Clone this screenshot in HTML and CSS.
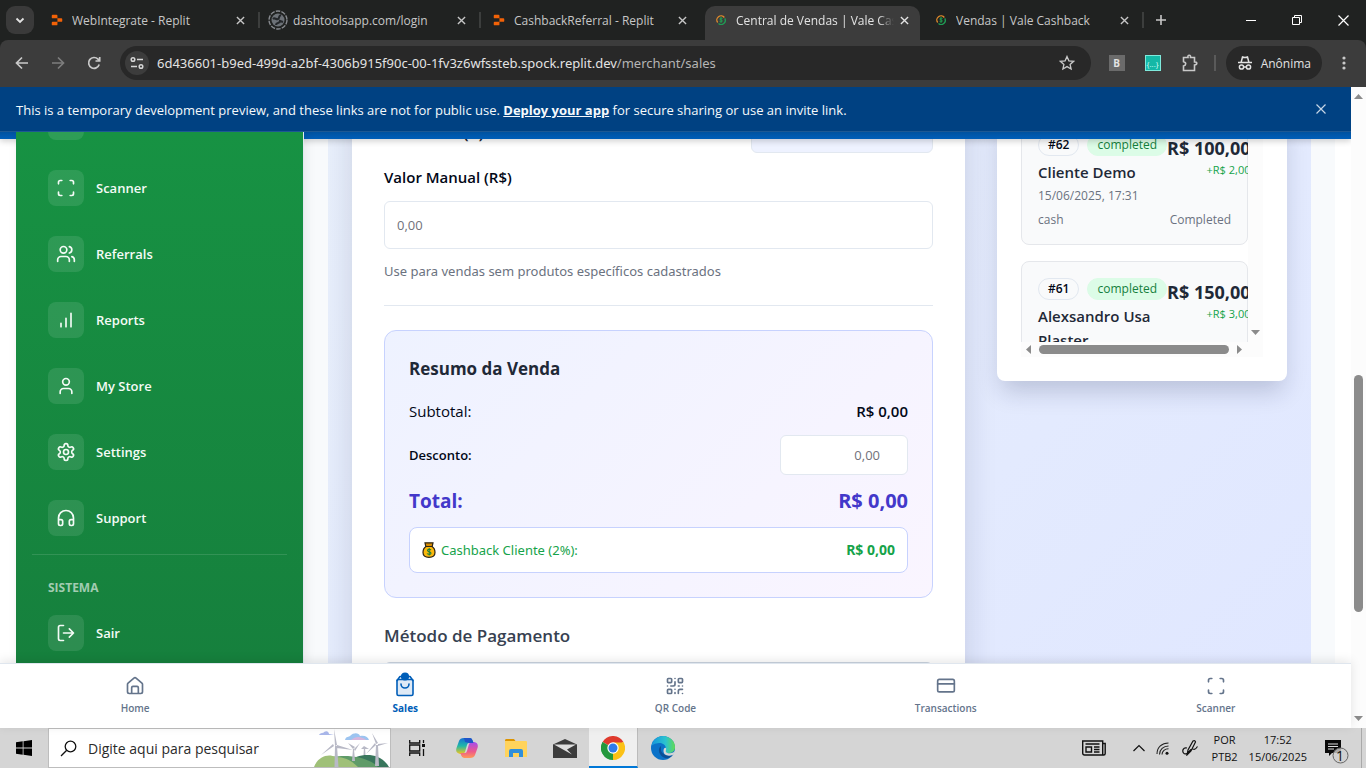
FILE: index.html
```html
<!DOCTYPE html>
<html lang="pt-BR">
<head>
<meta charset="utf-8">
<meta name="viewport" content="width=device-width, initial-scale=1">
<title>Central de Vendas | Vale Cashback</title>
<link rel="stylesheet" href="styles.css">
</head>
<body>
<svg class="defs" aria-hidden="true">
  <symbol id="replit" viewBox="0 0 16 16"><path fill="#f26207" d="M3 2h4.500q1 0 1 1v3H3q-1 0-1-1V3q0-1 1-1zM8.500 6H13q1 0 1 1v2q0 1-1 1H8.500zM2 11q0-1 1-1h5.500v3q0 1-1 1H3q-1 0-1-1z"/></symbol>
  <symbol id="vale" viewBox="0 0 12 12"><path d="M2 9a5 5 0 1 1 8-6" fill="none" stroke="#e08a2c" stroke-width="1.600"/><path d="M10.500 4A5 5 0 0 1 3 10.300" fill="none" stroke="#1f9d55" stroke-width="1.600"/><path d="M7.800 4.200C6.800 3.200 4.400 3.600 4.500 4.900s3.200.8 3.200 2.200S5 8.600 4.200 7.500M6 2.800v6.400" fill="none" stroke="#1fae57" stroke-width="1"/></symbol>
  <symbol id="x" viewBox="0 0 10 10"><path d="M1 1l8 8M9 1l-8 8" fill="none" stroke="currentColor" stroke-width="1.500"/></symbol>
  <symbol id="scan" viewBox="0 0 24 24"><path d="M3 7V5a2 2 0 0 1 2-2h2M17 3h2a2 2 0 0 1 2 2v2M21 17v2a2 2 0 0 1-2 2h-2M7 21H5a2 2 0 0 1-2-2v-2"/></symbol>
</svg>

<div class="tabstrip">
  <button class="tab-search" aria-label="Pesquisar guias"><svg width="12" height="12" viewBox="0 0 12 12"><path d="M2.500 4.500L6 8l3.500-3.500" fill="none" stroke="#e3e3e3" stroke-width="1.800"/></svg></button>
  <div class="tab"><span class="favicon"><svg width="14" height="14"><use href="#replit"/></svg></span><span class="tab-title">WebIntegrate - Replit</span><button class="tab-close" aria-label="Fechar"><svg width="9" height="9"><use href="#x"/></svg></button></div>
  <div class="tab"><span class="favicon"><svg width="20" height="20" viewBox="0 0 20 20"><circle cx="10" cy="10" r="9" fill="none" stroke="#888b90" stroke-width="1.400" stroke-dasharray="4.500 1.200"/><circle cx="10" cy="10" r="6.500" fill="#6d7278"/><path d="M5 9c2-2 3 1 5 0s0-3 3-4M8 15c0-3 4-1 4-4l3 1" fill="none" stroke="#24272a" stroke-width="2"/></svg></span><span class="tab-title">dashtoolsapp.com/login</span><button class="tab-close" aria-label="Fechar"><svg width="9" height="9"><use href="#x"/></svg></button></div>
  <div class="tab no-line"><span class="favicon"><svg width="14" height="14"><use href="#replit"/></svg></span><span class="tab-title">CashbackReferral - Replit</span><button class="tab-close" aria-label="Fechar"><svg width="9" height="9"><use href="#x"/></svg></button></div>
  <div class="tab active no-line"><span class="favicon"><svg width="10" height="10"><use href="#vale"/></svg></span><span class="tab-title">Central de Vendas | Vale Cashback</span><button class="tab-close" aria-label="Fechar"><svg width="9" height="9"><use href="#x"/></svg></button></div>
  <div class="tab"><span class="favicon"><svg width="10" height="10"><use href="#vale"/></svg></span><span class="tab-title">Vendas | Vale Cashback</span><button class="tab-close" aria-label="Fechar"><svg width="9" height="9"><use href="#x"/></svg></button></div>
  <button class="new-tab" aria-label="Nova guia"><svg width="12" height="12" viewBox="0 0 12 12"><path d="M6 1v10M1 6h10" stroke="#c7c7c7" stroke-width="1.600"/></svg></button>
  <div class="window-buttons">
    <button aria-label="Minimizar"><svg width="10" height="10"><path d="M0 5.500h10" stroke="#fff"/></svg></button>
    <button aria-label="Restaurar"><svg width="11" height="11" fill="none" stroke="#fff"><path d="M.5 2.500h7v7h-7zM2.500 2.500v-2h7v7h-2"/></svg></button>
    <button aria-label="Fechar janela"><svg width="11" height="11"><path d="M.5.5l10 10M10.500.5l-10 10" stroke="#fff" stroke-width="1.200"/></svg></button>
  </div>
</div>

<div class="toolbar">
  <div class="nav-buttons">
    <button aria-label="Voltar"><svg width="14" height="14" viewBox="0 0 14 14"><path d="M13 7H2M7 1.500L1.500 7 7 12.500"/></svg></button>
    <button aria-label="Avançar" class="dim"><svg width="14" height="14" viewBox="0 0 14 14"><path d="M1 7h11M7 1.500L12.500 7 7 12.500"/></svg></button>
    <button aria-label="Recarregar"><svg width="14" height="14" viewBox="0 0 14 14"><path d="M12.200 8.500A5.400 5.400 0 1 1 11 3.200l1.500 1.500M12.700 1v4H8.500"/></svg></button>
  </div>
  <div class="omnibox">
    <button class="site-info" aria-label="Informações do site"><svg width="14" height="14" viewBox="0 0 14 14" fill="none" stroke="#d6d6d6" stroke-width="1.500"><circle cx="3" cy="3.500" r="1.800"/><path d="M7 3.500h6M1 10.500h6"/><circle cx="11" cy="10.500" r="1.800"/></svg></button>
    <span class="url">6d436601-b9ed-499d-a2bf-4306b915f90c-00-1fv3z6wfssteb.spock.replit.dev<span>/merchant/sales</span></span>
    <button class="star" aria-label="Favoritar"><svg width="16" height="16" viewBox="0 0 16 16"><path d="M8 1.500l1.900 4.300 4.700.5-3.500 3.100 1 4.600L8 11.600 3.900 14l1-4.600L1.400 6.300l4.700-.5z" fill="none" stroke="#c9c9c9" stroke-width="1.300"/></svg></button>
  </div>
  <div class="extensions">
    <button class="ext-b" aria-label="Extensão B">B</button>
    <button class="ext-json" aria-label="JSON">{...}</button>
    <button aria-label="Extensões"><svg width="18" height="18" viewBox="0 0 18 18"><path d="M2.500 3.500H7q-.5-2.200 1.200-2.200T9.500 3.500h4V8q2.300-.2 2.300 1.300T13.500 11v5.500h-11V12q2.200-.5 2.200-2.200T2.500 7.700z" fill="none" stroke="#c9c9c9" stroke-width="1.600"/></svg></button>
    <span class="divider"></span>
    <button class="incognito"><svg width="16" height="16" viewBox="0 0 16 16" fill="none" stroke="#e3e3e3" stroke-width="1.500"><path d="M4.200 7L5.500 2q2.500 1 5 0l1.300 5M1 7.500h14"/><circle cx="4.500" cy="12" r="2.100"/><circle cx="11.500" cy="12" r="2.100"/><path d="M6.600 12h2.800"/></svg><span>Anônima</span></button>
    <button aria-label="Menu"><svg width="4" height="14" fill="#c9c9c9"><circle cx="2" cy="2" r="1.600"/><circle cx="2" cy="7" r="1.600"/><circle cx="2" cy="12" r="1.600"/></svg></button>
  </div>
</div>

<div class="viewport">
  <div class="page">
    <div class="banner">
      <p>This is a temporary development preview, and these links are not for public use. <a href="#">Deploy your app</a> for secure sharing or use an invite link.</p>
      <button aria-label="Close"><svg width="10" height="10" viewBox="0 0 10 10"><path d="M.5.5l9 9M9.500.5l-9 9" stroke="#c5d5e6" stroke-width="1.200"/></svg></button>
    </div>

    <div class="app">
      <div class="app-header"></div>
      <aside class="sidebar">
        <nav class="side-nav">
          <a href="#"><span class="tile"></span></a>
          <a href="#"><span class="tile"><svg class="icon"><use href="#scan"/></svg></span>Scanner</a>
          <a href="#"><span class="tile"><svg class="icon" viewBox="0 0 24 24"><path d="M16 21v-2a4 4 0 0 0-4-4H6a4 4 0 0 0-4 4v2"/><circle cx="9" cy="7" r="4"/><path d="M22 21v-2a4 4 0 0 0-3-3.870M16 3.130a4 4 0 0 1 0 7.750"/></svg></span>Referrals</a>
          <a href="#"><span class="tile"><svg class="icon" viewBox="0 0 24 24"><path d="M12 20V10M18 20V4M6 20v-4"/></svg></span>Reports</a>
          <a href="#"><span class="tile"><svg class="icon" viewBox="0 0 24 24"><path d="M19 21v-2a4 4 0 0 0-4-4H9a4 4 0 0 0-4 4v2"/><circle cx="12" cy="7" r="4"/></svg></span>My Store</a>
          <a href="#"><span class="tile"><svg class="icon" viewBox="0 0 24 24"><path d="M12.220 2h-.440a2 2 0 0 0-2 2v.180a2 2 0 0 1-1 1.730l-.430.250a2 2 0 0 1-2 0l-.150-.080a2 2 0 0 0-2.730.730l-.220.380a2 2 0 0 0 .730 2.730l.150.100a2 2 0 0 1 1 1.720v.510a2 2 0 0 1-1 1.740l-.150.090a2 2 0 0 0-.730 2.730l.220.380a2 2 0 0 0 2.730.730l.150-.080a2 2 0 0 1 2 0l.430.250a2 2 0 0 1 1 1.730V20a2 2 0 0 0 2 2h.440a2 2 0 0 0 2-2v-.180a2 2 0 0 1 1-1.730l.430-.250a2 2 0 0 1 2 0l.150.080a2 2 0 0 0 2.730-.730l.220-.390a2 2 0 0 0-.730-2.730l-.150-.080a2 2 0 0 1-1-1.740v-.500a2 2 0 0 1 1-1.740l.150-.090a2 2 0 0 0 .730-2.730l-.220-.380a2 2 0 0 0-2.730-.730l-.150.080a2 2 0 0 1-2 0l-.430-.250a2 2 0 0 1-1-1.730V4a2 2 0 0 0-2-2z"/><circle cx="12" cy="12" r="3"/></svg></span>Settings</a>
          <a href="#"><span class="tile"><svg class="icon" viewBox="0 0 24 24"><path d="M3 14h3a2 2 0 0 1 2 2v3a2 2 0 0 1-2 2H5a2 2 0 0 1-2-2v-7a9 9 0 0 1 18 0v7a2 2 0 0 1-2 2h-1a2 2 0 0 1-2-2v-3a2 2 0 0 1 2-2h3"/></svg></span>Support</a>
        </nav>
        <div class="side-system">
          <h2>SISTEMA</h2>
          <a href="#"><span class="tile"><svg class="icon" viewBox="0 0 24 24"><path d="M9 21H5a2 2 0 0 1-2-2V5a2 2 0 0 1 2-2h4M16 17l5-5-5-5M21 12H9"/></svg></span>Sair</a>
        </div>
      </aside>

      <main class="content">
        <div class="panel">
          <section class="card sale">
            <div class="row products"><h3>Produtos (0)</h3><button aria-label="Adicionar produto"></button></div>
            <label class="manual-label" for="manual">Valor Manual (R$)</label>
            <input class="manual" id="manual" type="text" placeholder="0,00">
            <p class="help">Use para vendas sem produtos específicos cadastrados</p>
            <hr>
            <div class="summary">
              <h3>Resumo da Venda</h3>
              <div class="row"><span>Subtotal:</span><strong>R$ 0,00</strong></div>
              <div class="row"><label for="discount">Desconto:</label><input id="discount" type="text" placeholder="0,00"></div>
              <div class="row total"><span>Total:</span><span class="total-value">R$ 0,00</span></div>
              <div class="row cashback"><span class="bag"><svg width="14" height="16" viewBox="0 0 14 16"><path d="M4 4.500C1.500 6 1 8.500 1 10.500 1 14 3.500 15.300 7 15.300s6-1.300 6-4.800c0-2-.5-4.500-3-6z" fill="#fbb80b" stroke="#2b2415" stroke-width="1.200"/><path d="M3 .8h8l-.8 3.700H3.800z" fill="#d78b00" stroke="#2b2415" stroke-width="1.200"/><path d="M9 8C8 7 5.500 7 5.500 8.500S9 9.700 9 11.200 6 12.700 5 11.500M7.200 6v7.500" fill="none" stroke="#18803c" stroke-width="1.100"/></svg>Cashback Cliente (2%):</span><b>R$ 0,00</b></div>
            </div>
            <h3 class="method-title" id="method-title">Método de Pagamento</h3>
            <select class="method" aria-labelledby="method-title"><option></option></select>
          </section>

          <section class="card recent">
            <div class="list">
              <div class="list-view">
                <article class="sale-item">
                  <div class="item-head">
                    <div><div class="pills"><span class="pill">#62</span><span class="pill done">completed</span></div><h4>Cliente Demo</h4><p>15/06/2025, 17:31</p></div>
                    <div class="amount"><b>R$ 100,00</b><span>+R$ 2,00</span></div>
                  </div>
                  <div class="row item-foot"><span>cash</span><span>Completed</span></div>
                </article>
                <article class="sale-item">
                  <div class="item-head">
                    <div><div class="pills"><span class="pill">#61</span><span class="pill done">completed</span></div><h4>Alexsandro Usa Plaster</h4></div>
                    <div class="amount"><b>R$ 150,00</b><span>+R$ 3,00</span></div>
                  </div>
                </article>
              </div>
              <div class="v-track"><svg width="9" height="5"><path d="M0 0h9L4.500 5z" fill="#8b8b8b"/></svg></div>
              <div class="h-track"><svg width="5" height="9"><path d="M5 0v9L0 4.500z" fill="#8b8b8b"/></svg><span class="h-thumb"></span><svg width="5" height="9"><path d="M0 0v9l5-4.500z" fill="#8b8b8b"/></svg></div>
            </div>
          </section>
        </div>
      </main>
    </div>

    <nav class="bottom-nav">
      <a href="#"><svg class="icon" viewBox="0 0 24 24"><path d="M3 10a2 2 0 0 1 .7-1.500l7-6a2 2 0 0 1 2.600 0l7 6A2 2 0 0 1 21 10v9a2 2 0 0 1-2 2H5a2 2 0 0 1-2-2zM8 21v-7a1.500 1.500 0 0 1 1.500-1.500h5A1.500 1.500 0 0 1 16 14v7"/></svg>Home</a>
      <a href="#" class="current"><svg class="icon bag-icon" viewBox="0 0 20 24"><rect x="2" y="7" width="16" height="16" rx="1.500" fill="#dfeaf6"/><path d="M2 8l3-4h10l3 4M6 11.500a4 4 0 0 0 8 0"/><circle cx="10" cy="4" r="3.300" fill="currentColor"/></svg>Sales</a>
      <a href="#"><svg class="icon" viewBox="0 0 24 24"><rect width="5" height="5" x="3" y="3" rx="1"/><rect width="5" height="5" x="16" y="3" rx="1"/><rect width="5" height="5" x="3" y="16" rx="1"/><path d="M21 16h-3a2 2 0 0 0-2 2v3M21 21v.01M12 7v3a2 2 0 0 1-2 2H7M3 12h.01M12 3h.01M12 16v.01M16 12h1M21 12v.01M12 21v-1"/></svg>QR Code</a>
      <a href="#"><svg class="icon" viewBox="0 0 24 24"><rect width="20" height="15" x="2" y="4" rx="2"/><path d="M2 9.500h20"/></svg>Transactions</a>
      <a href="#"><svg class="icon"><use href="#scan"/></svg>Scanner</a>
    </nav>
  </div>

  <div class="page-track">
    <svg width="9" height="5"><path d="M0 5h9L4.500 0z" fill="#8b8b8b"/></svg>
    <span class="gap-top"></span><span class="page-thumb"></span><span class="gap-bottom"></span>
    <svg width="9" height="5"><path d="M0 0h9L4.500 5z" fill="#8b8b8b"/></svg>
  </div>
</div>

<div class="taskbar">
  <button class="start" aria-label="Iniciar"><svg width="16" height="16" viewBox="0 0 16 16"><path d="M0 2.200L6.700 1.300v6.300H0zM7.500 1.200L16 0v7.600H7.500zM0 8.400h6.700v6.300L0 13.800zM7.500 8.400H16V16l-8.500-1.200z"/></svg></button>
  <label class="search"><svg width="17" height="17" viewBox="0 0 17 17" fill="none" stroke="#111" stroke-width="1.300"><circle cx="10.500" cy="6.500" r="5.300"/><path d="M6.700 10.300L1 16"/></svg><input type="text" placeholder="Digite aqui para pesquisar" aria-label="Pesquisar">
    <svg class="scene" width="76" height="38" viewBox="0 0 76 38"><path d="M5 6c2-3 4-1 5-3 3-2 5 0 5 2l5 1z" fill="#a9b7ea"/><path d="M31 11c1-4 4-3 5-4 4-4 9-3 10 0 5-1 8 1 9 4z" fill="#9cc4f0"/><path d="M37 11c5-5 12-3 15 0z" fill="#d6b6dd"/><path d="M35 32c8-7 30-11 40 6H35z" fill="#38765c"/><path d="M12 30c10-5 40-5 52 8H12z" fill="#5f9b68"/><path d="M0 38c4-10 13-14 22-10 10 0 17 5 22 10z" fill="#9fc078"/><g fill="#b8b9c6"><path d="M21 17h2l1.500 21h-4zM21 17L20 0l3 16zM20 17L7 26l12-11zM23 16l16 5-16-2zM62 16h2l1 21h-4zM62 15L58 4l6 10zM62 16l-10 9 9-11zM64 15l10-1-10 3zM39 20h1l1 12h-3zM39 20l-5-6 7 4zM40 20l6-6-5 8zM50 18h1l.5 8h-2zM50 18v-4M47 20l3-3 5 3z"/></g></svg>
  </label>
  <div class="apps">
    <button aria-label="Visão de tarefas"><svg width="17" height="16" viewBox="0 0 17 16" fill="none" stroke="#111" stroke-width="1.300"><path d="M.7 0v3h10V0M.7 16v-3h10v3M.7 5h10v6H.7zM14.500 0v3M14.500 9v7"/><path d="M13 4h3v3h-3z" fill="#111" stroke="none"/></svg></button>
    <button aria-label="Copilot"><svg width="22" height="20" viewBox="0 0 22 20"><defs><linearGradient id="cpa" x2="0" y2="1"><stop stop-color="#1670d4"/><stop offset=".5" stop-color="#20b8a8"/><stop offset="1" stop-color="#f5c51b"/></linearGradient><linearGradient id="cpb" x2="0" y2="1"><stop stop-color="#a34cf0"/><stop offset=".6" stop-color="#ee5a8b"/><stop offset="1" stop-color="#ff9a57"/></linearGradient></defs><path d="M8 0h6q2 0 2.800 3l.7 2H13q-1.500 0-2 2L9 14q-.8 2-3 2H4q-5-1-3.500-6L3 3Q4 0 8 0z" fill="url(#cpa)"/><path d="M14 20H8q-2 0-3-3l-.5-2H9q1.500 0 2-2l2-7q.8-2 3-2h2q5 1 3.500 6L19 17q-1 3-5 3z" fill="url(#cpb)"/><path d="M8 0h6q2 0 2.800 3l.7 2H13L9 4z" fill="#1f54c8"/></svg></button>
    <button aria-label="Explorador de Arquivos"><svg width="22" height="19" viewBox="0 0 22 19"><path d="M0 1.500Q0 0 1 0h8l1.500 2H0z" fill="#dd9400"/><path d="M0 2h21q1 0 1 1v15H0z" fill="#ffd35c"/><path d="M4 18v-6q0-2 2-2h10q2 0 2 2v6h-4v-4H8v4z" fill="#2f8fdb"/></svg></button>
    <button aria-label="Email"><svg width="24" height="19" viewBox="0 0 24 19"><path d="M0 5.500L12 0l12 5.500V19H0z" fill="#3c3c3c"/><path d="M1 5.500h22L14 10.500l5 5z" fill="#dedede"/></svg></button>
    <button class="running" aria-label="Google Chrome"><svg width="24" height="24" viewBox="0 0 24 24"><path d="M12 12L1.600 6A12 12 0 0 1 22.400 6z" fill="#df3a2d"/><path d="M12 12L22.400 6A12 12 0 0 1 12 24z" fill="#fbc116"/><path d="M12 12v12A12 12 0 0 1 1.600 6z" fill="#24983d"/><path d="M12 6.500h10.600L17 15l-5 9z" fill="#fbc116"/><path d="M1.600 6L7 15l5 3-4 5A12 12 0 0 1 1.600 6z" fill="#24983d"/><circle cx="12" cy="12" r="5.700" fill="#fff"/><circle cx="12" cy="12" r="4.500" fill="#2f7bea"/></svg></button>
    <button aria-label="Microsoft Edge"><svg width="24" height="24" viewBox="0 0 24 24"><defs><linearGradient id="eg"><stop stop-color="#1696dc"/><stop offset=".6" stop-color="#2bc3cf"/><stop offset="1" stop-color="#62dc52"/></linearGradient></defs><circle cx="12" cy="12" r="12" fill="#0b72c8"/><path d="M.5 10C2 3 8-1 15 .4 21 2 24 6.500 24 11c0 4-3 6-6 6-4 0-5-2-3.500-3.500C16 10 12 6.500 8 7 4 7.200 1 9 .5 10z" fill="url(#eg)"/><path d="M10 10c-4 3-2 10 4 12 3 .8 6-.8 7.500-3C16 21 11 18 10 14.500z" fill="#0c4f96"/><path d="M12.500 15c0-4 3.500-4 2.500-1-1 2 1 3.500 4 3.200 2.500 0 4-1 5-2.700-.5 3-1.500 4-2.500 4.500-4 1.500-9 .5-9-4z" fill="#d6d6d6"/></svg></button>
  </div>
  <div class="tray">
    <button aria-label="Notícias"><svg width="24" height="16" viewBox="0 0 24 16" fill="none" stroke="#111" stroke-width="1.400"><path d="M.7 1h20v14H2.500Q.7 15 .7 13zM20.700 3.500h2.500v10q0 1.500-1.500 1.500h-1M3.500 4h14M12 7h5.500M12 9.500h5.500M12 12h5.500M4 7h5.500v5H4z"/></svg></button>
    <button class="chev" aria-label="Ícones ocultos"><svg width="12" height="8"><path d="M.5 7L6 1.500 11.500 7" fill="none" stroke="#111" stroke-width="1.200"/></svg></button>
    <button aria-label="Rede"><svg width="13" height="13" viewBox="0 0 13 13" fill="none" stroke="#222" stroke-width="1.100"><path d="M1 12C1 5 6 1 12.500 1M3.500 12.500c0-5 4-8.500 9-8.500M6 12.500C6 9 9 6.800 12.500 6.800"/><circle cx="11" cy="11.300" r="1.500" fill="#111" stroke="none"/></svg></button>
    <button aria-label="Caneta"><svg width="17" height="16" viewBox="0 0 17 16" fill="none" stroke="#111" stroke-width="1.200"><path d="M5 15L6 10 11 1q2-1 2.500 1L9 11zM5 8C1 7 0 11 1.500 13s4 .5 5-1 2-3 4-3 2 2 5-2.500"/></svg></button>
    <div class="tray-text">POR<br>PTB2</div>
    <div class="tray-text clock">17:52<br>15/06/2025</div>
    <button class="notify" aria-label="Notificações"><svg width="24" height="24" viewBox="0 0 24 24"><path d="M0 0h16v13H7l-3 3v-3H0z" fill="#0a0a0a"/><path d="M3 4h10M3 6.500h10M3 9h6" stroke="#ddd"/><circle cx="15.500" cy="15.500" r="7.500" fill="#cfcfcf" fill-opacity=".8" stroke="#666"/></svg><span>1</span></button>
    <span class="desktop-edge"></span>
  </div>
</div>
</body>
</html>
```

FILE: styles.css
```css
* { box-sizing: border-box; }
body, p, h2, h3, h4 { margin: 0; }
body {
  height: 100vh;
  display: flex;
  flex-direction: column;
  overflow: hidden;
  font-family: "Open Sans", "Noto Sans", sans-serif;
  font-size: 13px;
  color: #020817;
  background: #202221;
}
button { border: 0; padding: 0; background: none; font: inherit; color: inherit; display: flex; align-items: center; justify-content: center; }
a { color: inherit; text-decoration: none; }
input, select { font: inherit; }
svg { display: block; flex: none; }
.defs { position: absolute; width: 0; height: 0; }
.icon { width: 20px; height: 20px; fill: none; stroke: currentColor; stroke-width: 2; stroke-linecap: round; stroke-linejoin: round; }
.row { display: flex; align-items: center; justify-content: space-between; }
.url, .help, .cashback { font-family: "Noto Sans", "Open Sans", sans-serif; }

/* Tab strip */
.tabstrip { flex: none; display: flex; height: 40px; color: #c7c7c7; font-size: 12px; }
.tab-search { width: 28px; height: 28px; margin: 6px; border-radius: 9px; background: #3a3a3a; }
.tab { flex: 0 1 221px; min-width: 0; display: flex; align-items: center; gap: 5px; padding: 0 12px 0 7px; margin-top: 6px; height: 34px; position: relative; }
.tab::after { content: ""; position: absolute; right: 1px; top: 6px; width: 2px; height: 16px; background: #3c3e3d; }
.tab.no-line::after { display: none; }
.tab .favicon { width: 20px; display: flex; justify-content: center; margin-top: -6px; }
.tab-title { flex: 1; min-width: 0; overflow: hidden; white-space: nowrap; margin-top: -6px; }
.tab-close { width: 18px; height: 18px; margin-top: -6px; }
.tab.active { flex-basis: 215px; margin-left: 2px; margin-right: 4px; padding: 0 7px 0 6px; gap: 5px; background: #3c3c3c; border-radius: 10px 10px 0 0; color: #e3e3e3; }
.tab.active .tab-title { margin-right: -4px; -webkit-mask-image: linear-gradient(90deg, #000 90%, transparent); mask-image: linear-gradient(90deg, #000 90%, transparent); }
.new-tab { width: 32px; }
.window-buttons { display: flex; margin-left: auto; }
.window-buttons button { width: 46px; }

/* Toolbar */
.toolbar { flex: none; display: flex; align-items: center; height: 47px; padding-bottom: 1px; background: #3c3c3c; border-radius: 8px 8px 0 0; color: #e3e3e3; }
.nav-buttons { display: flex; width: 120px; padding-left: 4px; }
.nav-buttons button { width: 36px; height: 34px; }
.nav-buttons path { fill: none; stroke: #c9c9c9; stroke-width: 1.700; }
.nav-buttons .dim path { stroke: #7d7d7d; }
.omnibox { flex: 1; min-width: 0; height: 34px; display: flex; align-items: center; padding: 0 16px 0 5px; background: #282828; border-radius: 17px; }
.site-info { width: 24px; height: 24px; border-radius: 12px; background: #3c3c3c; }
.url { flex: 1; min-width: 0; padding-left: 8px; overflow: hidden; white-space: nowrap; font-size: 13px; }
.url span { color: #b5b5b5; }
.extensions { display: flex; align-items: center; padding-left: 18px; }
.extensions button { height: 34px; min-width: 16px; }
.extensions .ext-b { width: 16px; height: 16px; background: #6b6b6b; font-size: 10px; font-weight: 700; margin-right: 20px; }
.extensions .ext-json { width: 16px; height: 16px; margin-right: 20px; background: #14b8a6; border: 1px solid #7fe9dc; font-size: 8px; color: #d6fffa; }
.divider { width: 2px; height: 16px; margin: 0 10px 0 15px; background: #5a5a5a; }
.extensions .incognito { gap: 8px; padding: 0 11px; margin-right: 20px; border-radius: 17px; background: #282828; font-size: 12px; }
.extensions button:last-child { min-width: 4px; margin-right: 20px; }

/* Browser viewport */
.viewport { flex: 1; min-height: 0; display: flex; background: #fff; }
.page { flex: 1; min-width: 0; display: flex; flex-direction: column; }
.page-track { width: 15px; display: flex; flex-direction: column; align-items: center; padding: 7px 0; background: #fcfcfc; }
.gap-top { flex: 276; }
.page-thumb { flex: 237; width: 9px; border-radius: 5px; background: #8b8b8b; }
.gap-bottom { flex: 104; }

.banner { flex: none; height: 45px; display: flex; align-items: center; justify-content: space-between; padding: 0 25px 0 16px; background: #004182; border-bottom: 1px solid #1d5893; color: #f5f9fc; white-space: nowrap; }
.banner p { padding-top: 2px; font-weight: 500; }
.banner a { font-weight: 700; text-decoration: underline; }

.app { flex: 1; min-height: 0; position: relative; display: flex; padding: 0 16px; overflow: hidden; }
.app-header { position: absolute; z-index: 1; top: 0; left: 0; right: 0; height: 7px; background: linear-gradient(#0052a0, #005eb8); box-shadow: 0 2px 6px rgba(0, 0, 0, .2); }

.sidebar { position: relative; z-index: 2; flex: none; width: 288px; padding: 0 16px; border-right: 1px solid #e2e8f0; background: linear-gradient(#179243, #16803d); box-shadow: 2px 0 10px rgba(0, 0, 0, .08); color: #f4fbf6; font-weight: 600; }
.side-nav { display: flex; flex-direction: column; gap: 14px; margin-top: -36px; }
.sidebar a { display: flex; align-items: center; gap: 12px; padding: 8px 16px; }
.tile { width: 36px; height: 36px; display: flex; align-items: center; justify-content: center; border-radius: 8px; background: rgba(255, 255, 255, .1); }
.side-system { margin-top: 10px; border-top: 1px solid rgba(255, 255, 255, .12); padding-top: 25px; }
.side-system h2 { padding-left: 16px; margin-bottom: 11px; font-size: 12px; line-height: 16px; font-weight: 700; color: #a2ccb1; }

.content { flex: 1; min-width: 0; padding: 0 24px; background: #f8fafc; }
.panel { height: 100%; display: grid; grid-template-columns: minmax(0, 1fr) 290px; gap: 32px; align-items: start; padding: 0 24px; background: linear-gradient(135deg, #e9f0fc, #e0e7ff); overflow: hidden; }
.card { background: #fff; }
.sale { margin-top: -19px; padding: 0 32px 24px; box-shadow: 0 0 30px rgba(20, 30, 70, .15); }
.card h3 { font-size: 18px; line-height: 28px; font-weight: 600; color: #1f2937; }
.products { height: 40px; margin-bottom: 12px; align-items: flex-start; }
.products button { width: 182px; height: 40px; border: 1px solid #e2e8f0; border-radius: 6px; background: #eef2ff; }
.card .products h3 { padding-top: 6px; font-size: 17px; }
.manual-label { display: block; margin-bottom: 12px; font-size: 15px; line-height: 24px; font-weight: 600; }
.card input { border: 1px solid #e2e8f0; border-radius: 6px; background: #fff; padding: 0 12px; }
.card input::placeholder { color: #71717a; opacity: 1; }
.manual { display: block; width: 100%; height: 48px; }
.help { margin-top: 12px; line-height: 20px; color: #6b7280; }
hr { margin: 24px 0; border: 0; border-top: 1px solid #e2e8f0; }
.summary { display: flex; flex-direction: column; gap: 12px; padding: 24px; border: 1px solid #c7d2fe; border-radius: 12px; background: linear-gradient(135deg, #eef2ff, #faf5ff); font-size: 15px; line-height: 24px; }
.card .summary h3 { margin-bottom: 4px; font-size: 17px; font-weight: 700; }
.summary strong { font-size: 15px; font-weight: 600; }
.summary label { font-size: 13px; font-weight: 600; }
.summary input { width: 128px; height: 40px; padding-right: 27px; text-align: right; font-size: 13px; }
.total { font-size: 19px; line-height: 28px; font-weight: 700; color: #4338ca; }
.total-value { font-size: 20px; }
.cashback { padding: 12px; border: 1px solid #c7d2fe; border-radius: 8px; background: #fff; font-size: 13px; line-height: 20px; color: #16a34a; }
.cashback b { font-size: 14px; }
.bag { display: flex; align-items: center; gap: 5px; }
.card .method-title { margin: 24px 0 12px; font-size: 17px; font-weight: 600; color: #374151; }
.method { display: block; width: 100%; height: 48px; border: 1px solid #cbd5e1; border-radius: 6px; background: #fff; }

.recent { padding: 0 24px 24px; margin-top: -19px; border-radius: 8px; box-shadow: 0 14px 24px -4px rgba(20, 30, 70, .2); }
.list { display: grid; grid-template-columns: minmax(0, 1fr) 15px; }
.list-view { height: 229px; padding-top: 4px; overflow: hidden; display: flex; flex-direction: column; gap: 16px; }
.sale-item { flex: none; padding: 16px; border: 1px solid #e5e7eb; border-radius: 8px; background: #f9fafb; font-size: 12px; line-height: 16px; color: #6b7280; }
.item-head { display: flex; justify-content: space-between; white-space: nowrap; }
.pills { display: flex; gap: 8px; }
.pill { height: 22px; padding: 0 9px; border: 1px solid #e2e8f0; border-radius: 11px; font-size: 12px; line-height: 20px; font-weight: 600; color: #020817; }
.pill.done { border-color: #dcfce7; background: #dcfce7; color: #15803d; font-weight: 500; }
.sale-item h4 { width: 120px; margin-top: 4px; font-size: 15px; line-height: 24px; font-weight: 600; color: #1f2937; white-space: normal; }
.sale-item p { margin-top: 4px; }
.amount { display: flex; flex-direction: column; text-align: right; font-size: 11px; color: #16a34a; }
.amount b { font-size: 18px; line-height: 28px; color: #1f2937; }
.item-foot { margin-top: 8px; }
.v-track { display: flex; align-items: flex-end; justify-content: center; padding-bottom: 7px; background: #fcfcfc; }
.h-track { grid-column: 1 / -1; display: flex; align-items: center; height: 15px; padding: 0 21px 0 5px; gap: 8px; background: #fcfcfc; }
.h-thumb { flex: 1; height: 9px; border-radius: 5px; background: #8b8b8b; }

.bottom-nav { flex: none; position: relative; z-index: 3; display: grid; grid-template-columns: repeat(5, 1fr); height: 65px; border-top: 1px solid #dfe6ee; background: #fff; box-shadow: 0 -2px 10px rgba(0, 0, 0, .1); color: #64748b; font-size: 10px; line-height: 14px; font-weight: 600; }
.bottom-nav a { display: flex; flex-direction: column; align-items: center; gap: 5px; padding-top: 12px; }
.bottom-nav .current { color: #005eb8; font-weight: 700; gap: 4px; padding-top: 8px; }
.bottom-nav .bag-icon { height: 25px; stroke-width: 1.600; }

/* Taskbar */
.taskbar { flex: none; display: flex; height: 40px; background: #d5d5d5; color: #111; }
.start { width: 48px; }
.search { width: 343px; display: flex; align-items: center; gap: 11px; padding-left: 11px; border: 1px solid #bdbdbd; background: #fff; }
.search input { flex: 1; min-width: 0; padding: 0; border: 0; outline: 0; font-size: 14px; }
.search input::placeholder { color: #2b2b2b; opacity: 1; }
.apps { display: flex; padding-left: 2px; }
.apps button { width: 49px; }
.apps .running { background: #efefef; border-bottom: 2px solid #0078d7; border-right: 1px solid #bbb; padding-top: 2px; }
.tray { display: flex; align-items: center; margin-left: auto; }
.tray button { height: 40px; margin-right: 13px; }
.tray .chev { margin-left: 14px; margin-right: 11px; }
.tray-text { font-size: 11px; line-height: 17px; text-align: center; }
.clock { padding: 0 18px 0 11px; }
.tray .notify { position: relative; margin-right: 12px; padding-top: 8px; }
.notify span { position: absolute; right: 5px; bottom: 4px; font-size: 14px; line-height: 16px; }
.desktop-edge { width: 5px; height: 40px; border-left: 1px solid #a9a9a9; }
```
